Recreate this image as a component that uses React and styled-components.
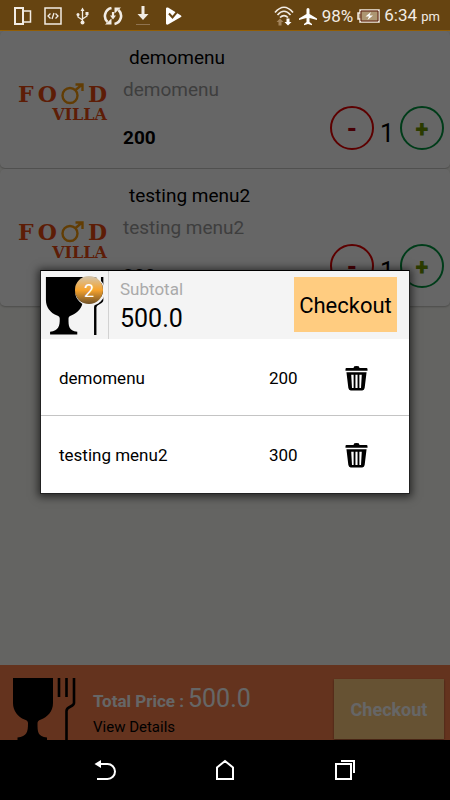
import React from 'react';
import styled, { createGlobalStyle } from 'styled-components';

const GlobalStyle = createGlobalStyle`
  * {
    box-sizing: border-box;
  }
  body {
    margin: 0;
    background: #000;
    font-family: Roboto, 'Liberation Sans', sans-serif;
    color: #000;
  }
  button {
    padding: 0;
    border: 0;
    background: none;
    font-family: inherit;
    color: inherit;
    cursor: pointer;
  }
  svg {
    display: block;
  }
`;

const Screen = styled.div`
  display: flex;
  flex-direction: column;
  min-height: 100vh;
`;

const StatusBar = styled.header`
  display: flex;
  justify-content: space-between;
  align-items: center;
  height: 31px;
  padding: 0 10px 0 13px;
  border-bottom: 1px solid #945f05;
  background: #664411;
  color: #f2ece4;
`;

const StatusGroup = styled.div`
  display: flex;
  align-items: center;
  gap: ${({ $gap }) => $gap}px;
  padding-top: 2px;
`;

const StatusText = styled.span`
  font-size: ${({ $small }) => ($small ? 13 : 17)}px;
  line-height: 20px;
`;

const Body = styled.div`
  position: relative;
  flex: 1;
  display: flex;
  flex-direction: column;
`;

const Menu = styled.main`
  flex: 1;
  display: flex;
  flex-direction: column;
  gap: 1px;
  background: #fafaf5;
`;

const Card = styled.article`
  display: flex;
  padding: 15px 6px 18px 18px;
  border-radius: 5px;
  background: #fff;
  box-shadow: 0 1px 2px rgba(0, 0, 0, 0.25);
`;

const Brand = styled.div`
  display: flex;
  flex-direction: column;
  align-items: flex-end;
  width: 89px;
  margin-right: 16px;
  padding-top: 35px;
  font-family: 'DejaVu Serif', serif;
  font-weight: 700;
  color: #e84a10;
`;

const BrandTop = styled.span`
  display: flex;
  justify-content: space-between;
  align-items: center;
  width: 100%;
  font-size: 22px;
  line-height: 26px;
`;

const BrandBottom = styled.span`
  font-size: 16px;
  line-height: 16px;
`;

const Info = styled.div`
  flex: 1;
  min-width: 0;
  line-height: 24px;
`;

const Title = styled.h2`
  margin: 0 0 8px;
  padding-left: 6px;
  font-size: 19px;
  font-weight: 400;
`;

const Description = styled.p`
  margin: 0 0 24px;
  font-size: 19px;
  color: #9c9c9c;
`;

const Price = styled.p`
  margin: 0;
  font-size: 19px;
  font-weight: 700;
`;

const Quantity = styled.div`
  display: flex;
  align-items: center;
  align-self: flex-end;
`;

const Count = styled.output`
  width: 26px;
  padding-top: 12px;
  font-size: 25px;
  line-height: 32px;
  text-align: center;
`;

const RoundButton = styled.button`
  width: 44px;
  height: 44px;
  padding-top: 2px;
  border: 2px solid ${({ $ring }) => $ring};
  border-radius: 50%;
  font-size: 24px;
  font-weight: 900;
  line-height: 38px;
  color: ${({ $sign }) => $sign};
`;

const Footer = styled.footer`
  display: flex;
  align-items: flex-start;
  height: 75px;
  padding: 12px 6px 0 12px;
  overflow: hidden;
  background: #f97f4b;
`;

const FooterText = styled.div`
  flex: 1;
  padding: 6px 0 0 17px;
`;

const Total = styled.p`
  display: flex;
  align-items: baseline;
  gap: 4px;
  margin: 0;
  font-size: 17px;
  font-weight: 700;
  line-height: 32px;
  color: #fff;
`;

const TotalValue = styled.span`
  font-size: 25px;
  font-weight: 400;
`;

const DetailsLink = styled.a`
  display: block;
  font-size: 15px;
  line-height: 20px;
  color: #000;
  text-decoration: none;
`;

const FooterCheckout = styled.button`
  width: 110px;
  height: 60px;
  margin-top: 2px;
  background: #ffcc80;
  box-shadow: 0 1px 2px rgba(0, 0, 0, 0.4);
  font-size: 18px;
  font-weight: 700;
  color: #fff;
`;

const Overlay = styled.div`
  position: absolute;
  inset: 0;
  display: flex;
  align-items: center;
  justify-content: center;
  padding: 0 40px 8px;
  background: rgba(0, 0, 0, 0.6);
`;

const Dialog = styled.section`
  width: 100%;
  border: 1px solid #222;
  border-top-color: #000;
  background: #fff;
  box-shadow: 0 1px 8px 2px rgba(0, 0, 0, 0.6);
`;

const DialogHeader = styled.div`
  display: flex;
  align-items: center;
  height: 68px;
  padding-right: 12px;
  background: #f4f4f4;
`;

const CartBadge = styled.div`
  position: relative;
  align-self: stretch;
  width: 68px;
  padding: 5px 4px;
  border-right: 1px solid #d2d2d2;
`;

const Badge = styled.span`
  position: absolute;
  top: 5px;
  right: 5px;
  width: 28px;
  height: 28px;
  border-radius: 50%;
  background: linear-gradient(#d2c5ae, #f7a32c 50%, #6e5128);
  box-shadow: 1px 1px 0 1px #f4f4f4;
  font-size: 18px;
  line-height: 30px;
  text-align: center;
  color: #fff;
`;

const Subtotal = styled.div`
  flex: 1;
  padding: 4px 0 0 11px;
  font-size: 17px;
  line-height: 24px;
  color: #aaa;
`;

const SubtotalValue = styled.div`
  font-size: 25px;
  line-height: 36px;
  color: #000;
`;

const Checkout = styled.button`
  width: 103px;
  height: 55px;
  padding-top: 2px;
  background: #ffcc80;
  font-size: 22px;
`;

const CartTable = styled.table`
  width: 100%;
  border-collapse: collapse;
  font-size: 17px;

  tr + tr {
    border-top: 1px solid #c4c4c4;
  }
`;

const Cell = styled.td`
  width: ${({ $width }) => $width || 'auto'};
  height: 77px;
  padding: 2px 0 0 ${({ $indent }) => $indent || 0}px;
`;

const DeleteButton = styled.button`
  display: block;
`;

const NavBar = styled.nav`
  display: flex;
  height: 60px;
  padding: 0 45px;
  background: #000;
`;

const NavButton = styled.button`
  flex: 1;
  display: flex;
  align-items: center;
  justify-content: center;
  color: #fff;
`;

const StatusIcon = ({ children }) => (
  <svg width="20" height="20" viewBox="0 0 20 20" fill="none" stroke="currentColor" aria-hidden="true">
    {children}
  </svg>
);

const Goblet = ({ size }) => (
  <svg width={size} height={size} viewBox="0 0 64 64" aria-hidden="true">
    <path d="M1 1h40v25c0 9-6 14-12 16.500c-3 1-3.500 2-3.500 4c0 8 0 13 9.500 14v3H5.500v-3c9.500-1 10.500-6 10.500-14c0-2-.5-3-3.500-4C6 40 1 34 1 26z" />
    <path d="M47 1v19M54.500 1v19M62 1v25c0 4-7.500 3-7.500 8v30" fill="none" stroke="#000" strokeWidth="2.600" />
  </svg>
);

const Male = () => (
  <svg width="23" height="22" viewBox="0 0 23 22" fill="none" stroke="#f59a0c" aria-hidden="true">
    <circle cx="9" cy="12.500" r="7.500" strokeWidth="2.400" />
    <path d="M14 7.500L20.500 2M14.500 1.500h7v6.500" strokeWidth="2.400" />
  </svg>
);

const Trash = () => (
  <svg width="23" height="26" viewBox="0 0 24 27" aria-hidden="true">
    <path d="M9 2.500q0-1.500 3-1.500t3 1.500V3h7.500q1 0 1 1.500V6H.5V4.500Q.5 3 1.500 3H9z" />
    <path
      fillRule="evenodd"
      d="M1.500 7.500h21l-2 16.500q-.4 2.500-2.500 2.500H6q-2.100 0-2.500-2.500zM6.500 10l.8 14h1.700V10zM10.900 10v14h2.200V10zM15 10v14h1.700l.8-14z"
    />
  </svg>
);

const BrandLogo = () => (
  <Brand>
    <BrandTop>
      <span>F</span>
      <span>O</span>
      <Male />
      <span>D</span>
    </BrandTop>
    <BrandBottom>VILLA</BrandBottom>
  </Brand>
);

const items = [
  { name: 'demomenu', price: 200, count: 1 },
  { name: 'testing menu2', price: 300, count: 1 },
];

const MenuCard = ({ item: { name, price, count } }) => (
  <Card>
    <BrandLogo />
    <Info>
      <Title>{name}</Title>
      <Description>{name}</Description>
      <Price>{price}</Price>
    </Info>
    <Quantity>
      <RoundButton $ring="#e60000" $sign="#b40010" aria-label={`Remove one ${name}`}>-</RoundButton>
      <Count>{count}</Count>
      <RoundButton $ring="#009640" $sign="#6b9400" aria-label={`Add one ${name}`}>+</RoundButton>
    </Quantity>
  </Card>
);

const Status = () => (
  <StatusBar>
    <StatusGroup $gap={10}>
      <StatusIcon>
        <path d="M2 2h8v16H2z" strokeWidth="2" />
        <path d="M10 5h7.500v11H10" strokeWidth="1.500" />
      </StatusIcon>
      <StatusIcon>
        <path d="M2 2h16v16H2z" strokeWidth="1.500" />
        <path d="M7.500 7.500L5 10l2.500 2.500M12.500 7.500L15 10l-2.500 2.500M11 7l-2 6" strokeWidth="1.300" />
      </StatusIcon>
      <StatusIcon>
        <path d="M9.500 4v13M5 8.500V11l4.500 3M14 7.500V10l-4.500 3" strokeWidth="1.300" />
        <path d="M9.500 1.500l2 3.500h-4zM12.500 6h3v3h-3z" fill="currentColor" stroke="none" />
        <circle cx="5" cy="8.500" r="1.500" fill="currentColor" stroke="none" />
        <circle cx="9.500" cy="16.500" r="2" fill="currentColor" stroke="none" />
      </StatusIcon>
      <StatusIcon>
        <path d="M8.500 2A8.200 8.200 0 0 0 4.500 16M11.500 18A8.200 8.200 0 0 0 15.500 4" strokeWidth="2.600" />
        <path d="M2 18.500h6.500v-6zM18 1.500h-6.500v6z" fill="currentColor" stroke="none" />
        <path d="M10 6v4.500" strokeWidth="2.200" />
        <path d="M7 9.500h6L10 13.500z" fill="currentColor" stroke="none" />
      </StatusIcon>
      <StatusIcon>
        <path d="M10 0v9" strokeWidth="3" />
        <path d="M4.500 8h11L10 14z" fill="currentColor" stroke="none" />
        <path d="M3 18.500h14" stroke="#8f7350" />
      </StatusIcon>
      <StatusIcon>
        <path d="M3 2.500q0-1.500 2-1l13 8q1 1 0 1.500l-13 7.500q-2 .5-2-1z" fill="#fff" stroke="none" />
        <path d="M6 7.500l3.500 4L16 3.500" stroke="#664411" strokeWidth="2" />
      </StatusIcon>
    </StatusGroup>
    <StatusGroup $gap={4}>
      <StatusIcon>
        <path d="M1 6.500Q10-4 19 6.500M3.500 9Q10 1.500 16.500 9M6 11.500q4-4 8 0" strokeWidth="1.700" />
        <path d="M6 12.500L9.500 16H7.500v3.500h-3V16h-2z" fill="#a3845c" stroke="none" />
        <path d="M14 19.500L10.500 16h2v-3.500h3V16h2z" fill="#fff" stroke="none" />
      </StatusIcon>
      <StatusIcon>
        <path
          d="M8.500 3.500a1.500 1.500 0 0 1 3 0V8l7.500 4.500V14l-7.500-2v4l2.500 2v1.200L10 18l-4 1.200V18l2.500-2v-4L1 14v-1.500L8.500 8z"
          fill="#fff"
          stroke="none"
        />
      </StatusIcon>
      <StatusText>98%</StatusText>
      <svg width="23" height="14" viewBox="0 0 23 14" aria-hidden="true">
        <path d="M3 1h19v12H3v-3H1V4h2z" fill="#ad9672" stroke="#f2ece4" strokeWidth="1.500" />
        <path d="M4 2h17v10H4z" fill="none" stroke="#5b1b0a" />
        <path d="M14 3L8.500 7.500H12L10.500 11L16 6.500h-3.500z" fill="#fff" />
      </svg>
      <StatusText>
        6:34 <StatusText $small>pm</StatusText>
      </StatusText>
    </StatusGroup>
  </StatusBar>
);

const CartDialog = () => (
  <Overlay>
    <Dialog role="dialog" aria-label="Cart">
      <DialogHeader>
        <CartBadge>
          <Goblet size={59} />
          <Badge>{items.length}</Badge>
        </CartBadge>
        <Subtotal>
          Subtotal
          <SubtotalValue>500.0</SubtotalValue>
        </Subtotal>
        <Checkout>Checkout</Checkout>
      </DialogHeader>
      <CartTable>
        <tbody>
          {items.map(({ name, price }) => (
            <tr key={name}>
              <Cell $indent={18}>{name}</Cell>
              <Cell $width="76px">{price}</Cell>
              <Cell $width="64px">
                <DeleteButton aria-label={`Delete ${name}`}>
                  <Trash />
                </DeleteButton>
              </Cell>
            </tr>
          ))}
        </tbody>
      </CartTable>
    </Dialog>
  </Overlay>
);

const App = () => (
  <Screen>
    <GlobalStyle />
    <Status />
    <Body>
      <Menu>
        {items.map((item) => (
          <MenuCard key={item.name} item={item} />
        ))}
      </Menu>
      <Footer>
        <Goblet size={64} />
        <FooterText>
          <Total>
            Total Price : <TotalValue>500.0</TotalValue>
          </Total>
          <DetailsLink href="#details">View Details</DetailsLink>
        </FooterText>
        <FooterCheckout>Checkout</FooterCheckout>
      </Footer>
      <CartDialog />
    </Body>
    <NavBar>
      <NavButton aria-label="Back">
        <svg width="22" height="22" viewBox="0 0 22 22" fill="none" stroke="currentColor" strokeWidth="2">
          <path d="M5 5h8.500a7.500 7.500 0 0 1 0 15H3" />
          <path d="M.5 5L7 1v8z" fill="currentColor" stroke="none" />
        </svg>
      </NavButton>
      <NavButton aria-label="Home">
        <svg width="20" height="22" viewBox="0 0 20 22" fill="none" stroke="currentColor" strokeWidth="2">
          <path d="M2 20V8.500L10 2l8 6.500V20z" />
        </svg>
      </NavButton>
      <NavButton aria-label="Recent apps">
        <svg width="20" height="20" viewBox="0 0 20 20" fill="none" stroke="currentColor" strokeWidth="2">
          <path d="M1 4h15v15H1zM6 1h13v12" />
        </svg>
      </NavButton>
    </NavBar>
  </Screen>
);

export default App;
